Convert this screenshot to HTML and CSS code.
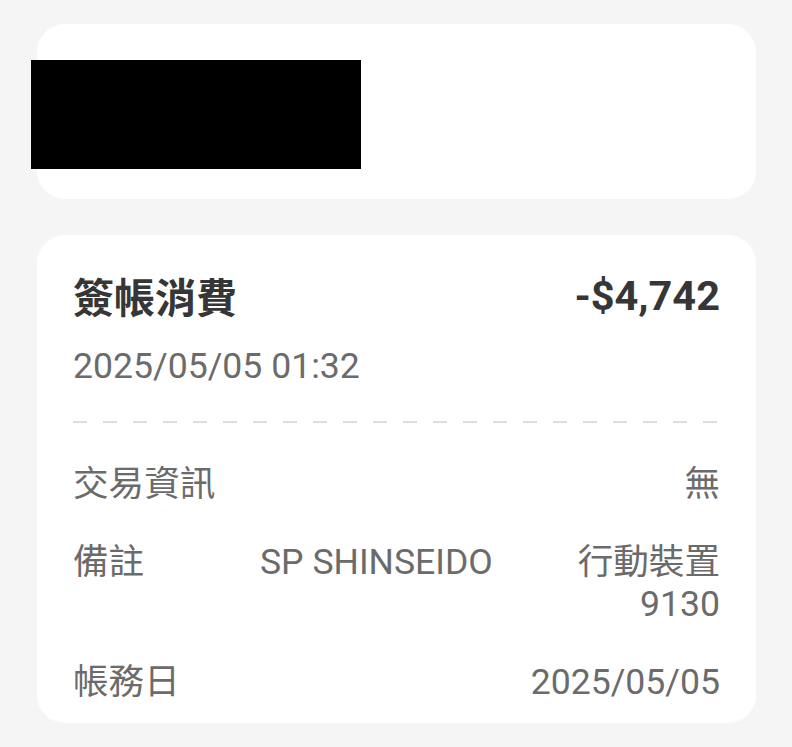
FILE: index.html
```html
<!DOCTYPE html>
<html lang="zh-Hant">

<head>
  <meta name="viewport" content="width=device-width, initial-scale=1">
  <meta charset="UTF-8">
  <link rel="stylesheet" href="styles.css">
</head>

<body>
  <div class="card card-top">
    <div class="redact"></div>
  </div>

  <div class="card card-detail">
    <div class="head">
      <span class="title">簽帳消費</span>
      <span class="amount">-$4,742</span>
    </div>
    <div class="date">2025/05/05 01:32</div>
    <div class="divider"></div>

    <div class="rows">
      <div class="row">
        <span class="label">交易資訊</span>
        <span class="value">無</span>
      </div>
      <div class="row">
        <span class="label label-wide">備註</span>
        <span class="value value-split">
          <span>SP SHINSEIDO</span>
          <span class="device">行動裝置<br>9130</span>
        </span>
      </div>
      <div class="row">
        <span class="label">帳務日</span>
        <span class="value">2025/05/05</span>
      </div>
    </div>
  </div>
</body>

</html>
```

FILE: styles.css
```css
body {
  margin: 0;
  padding: 24px 36px 0 37px;
  background-color: #f5f5f5;
  font-family: Roboto, "Noto Sans CJK TC", sans-serif;
}

.card {
  background-color: #ffffff;
  border-radius: 28px;
}

.card-top {
  position: relative;
  height: 175px;
  margin-bottom: 36px;
}

/* redaction block */
.redact {
  position: absolute;
  left: -6px;
  top: 36px;
  width: 330px;
  height: 109px;
  background-color: #000000;
}

.card-detail {
  padding: 32px 36px 20px 36px;
}

.head {
  display: flex;
  justify-content: space-between;
  align-items: center;
  height: 56px;
  color: #363636;
  font-weight: 700;
}

.title {
  font-size: 41px;
  font-family: "Noto Sans CJK TC", sans-serif;
}

.amount {
  font-size: 41.5px;
}

.date {
  margin-top: 19px;
  line-height: 48px;
  font-size: 35.6px;
  color: #6b6b6b;
}

.divider {
  margin-top: 31px;
  height: 2px;
  background-image: repeating-linear-gradient(90deg, #dedede 0, #dedede 14px, transparent 14px, transparent 30px);
}

.rows {
  display: flex;
  flex-direction: column;
  gap: 36px;
  margin-top: 40px;
}

.row {
  display: flex;
  justify-content: space-between;
  align-items: flex-start;
  font-size: 35.6px;
  line-height: 42px;
  color: #6b6b6b;
}

.label-wide {
  width: 187px;
  flex-shrink: 0;
}

.value {
  text-align: right;
}

.value-split {
  flex: 1;
  display: flex;
  justify-content: space-between;
  align-items: flex-start;
}

.device {
  text-align: right;
}
```
